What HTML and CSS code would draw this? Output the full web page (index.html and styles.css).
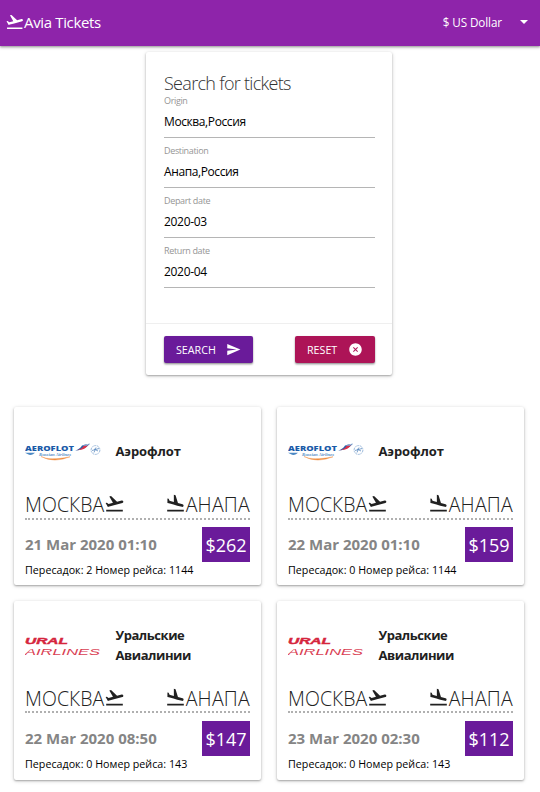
FILE: index.html
```
<!DOCTYPE html>
<html lang="en">
<head>
<meta charset="utf-8">
<title>Avia Tickets</title>
<link rel="stylesheet" href="styles.css">
</head>
<body>
<svg class="defs" aria-hidden="true">
  <symbol id="takeoff" viewBox="0 0 24 24"><path d="M2.5 19h19v2h-19zm19.57-9.36c-.21-.8-1.04-1.28-1.84-1.06L14.92 10l-6.9-6.43-1.93.51 4.14 7.17-4.97 1.33-1.97-1.54-1.45.39 1.82 3.16.77 1.33 1.6-.43 5.31-1.42 4.35-1.16L21 11.49c.81-.23 1.28-1.05 1.07-1.85z"/></symbol>
  <symbol id="land" viewBox="0 0 24 24"><path d="M2.5 19h19v2h-19zm7.18-5.73l4.35 1.16 5.31 1.42c.8.21 1.62-.26 1.84-1.06.21-.8-.26-1.62-1.06-1.84l-5.31-1.42-2.76-9.02L10.12 2v8.28L5.15 8.95l-.93-2.32-1.45-.39v5.17l1.6.43 5.31 1.43z"/></symbol>
  <symbol id="aeroflot-mark" viewBox="0 0 76 20">
    <path d="M50 7.500Q55 6 57 2.500Q61 1 65 .7Q62 4.500 57 6Q53 7.500 50 7.500Z" fill="#2a60a8"/>
    <path d="M52 7.300Q57 6 58.500 3L63 2.300Q60 6.500 56 6.800Z" fill="#dc3149"/>
    <path d="M57 2.500L65 .5L62 2.500Z" fill="#b9cde6"/>
    <path d="M0 9.800L10 9.800L8 11.300Q5 12.500 3 11.200Z" fill="#4b88c4"/>
    <path d="M16 13.500Q24 18 45 13.800Q29 20.500 16 13.500Z" fill="#ef8a3c" stroke="#ef8a3c" stroke-width=".4"/>
    <circle cx="70.500" cy="7" r="4.400" fill="none" stroke="#8fb0d6" stroke-width=".9" stroke-dasharray="2 .7"/>
    <path d="M67 7.500L74 5.500M69 9.500L71 4.500M69 6L73 8" stroke="#5d8cc0" stroke-width=".8"/>
  </symbol>
</svg>
<nav class="nav">
  <div class="brand"><svg class="brand-icon"><use href="#takeoff"/></svg><span>Avia Tickets</span></div>
  <div class="currency"><span>$ US Dollar</span><i class="caret"></i></div>
</nav>
<main>
  <form class="search">
    <div class="search-body">
      <h1>Search for tickets</h1>
      <div class="field"><label>Origin</label><p>Москва,Россия</p></div>
      <div class="field"><label>Destination</label><p>Анапа,Россия</p></div>
      <div class="field"><label>Depart date</label><p class="date">2020-03</p></div>
      <div class="field"><label>Return date</label><p class="date">2020-04</p></div>
    </div>
    <div class="actions">
      <button type="button" class="btn go"><span>SEARCH</span><svg viewBox="0 0 24 24"><path d="M2.010 21L23 12 2.010 3 2 10l15 2-15 2z"/></svg></button>
      <button type="button" class="btn reset"><span>RESET</span><svg viewBox="0 0 24 24"><path d="M12 2C6.470 2 2 6.470 2 12s4.470 10 10 10 10-4.470 10-10S17.530 2 12 2zm4 12.900L14.900 16 12 13.100 9.100 16 8 14.900 10.900 12 8 9.100 9.100 8 12 10.900 14.900 8 16 9.100 13.100 12z"/></svg></button>
    </div>
  </form>
  <section class="tickets">
    <article class="ticket">
      <div class="airline"><svg class="logo" viewBox="0 0 76 20"><text class="aero-name" x="0" y="7.500" textLength="49" lengthAdjust="spacingAndGlyphs">AEROFLOT</text><text class="aero-sub" x="14" y="13" textLength="32" lengthAdjust="spacingAndGlyphs">Russian Airlines</text><use href="#aeroflot-mark"/></svg><h2>Аэрофлот</h2></div>
      <div class="route"><div><span class="from">МОСКВА</span><svg><use href="#takeoff"/></svg></div><div><svg><use href="#land"/></svg><span class="to">АНАПА</span></div></div>
      <div class="fare"><time>21 Mar 2020 01:10</time><b>$262</b></div>
      <p class="info">Пересадок: 2 Номер рейса: 1144</p>
    </article>
    <article class="ticket">
      <div class="airline"><svg class="logo" viewBox="0 0 76 20"><text class="aero-name" x="0" y="7.500" textLength="49" lengthAdjust="spacingAndGlyphs">AEROFLOT</text><text class="aero-sub" x="14" y="13" textLength="32" lengthAdjust="spacingAndGlyphs">Russian Airlines</text><use href="#aeroflot-mark"/></svg><h2>Аэрофлот</h2></div>
      <div class="route"><div><span class="from">МОСКВА</span><svg><use href="#takeoff"/></svg></div><div><svg><use href="#land"/></svg><span class="to">АНАПА</span></div></div>
      <div class="fare"><time>22 Mar 2020 01:10</time><b>$159</b></div>
      <p class="info">Пересадок: 0 Номер рейса: 1144</p>
    </article>
    <article class="ticket ural">
      <div class="airline"><svg class="logo" viewBox="0 0 76 20"><text class="ural-name" x="0" y="7" textLength="43" lengthAdjust="spacingAndGlyphs">URAL</text><text class="ural-sub" x="0" y="17.500" textLength="75" lengthAdjust="spacingAndGlyphs">AIRLINES</text></svg><h2>Уральские<br>Авиалинии</h2></div>
      <div class="route"><div><span class="from">МОСКВА</span><svg><use href="#takeoff"/></svg></div><div><svg><use href="#land"/></svg><span class="to">АНАПА</span></div></div>
      <div class="fare"><time>22 Mar 2020 08:50</time><b>$147</b></div>
      <p class="info">Пересадок: 0 Номер рейса: 143</p>
    </article>
    <article class="ticket ural">
      <div class="airline"><svg class="logo" viewBox="0 0 76 20"><text class="ural-name" x="0" y="7" textLength="43" lengthAdjust="spacingAndGlyphs">URAL</text><text class="ural-sub" x="0" y="17.500" textLength="75" lengthAdjust="spacingAndGlyphs">AIRLINES</text></svg><h2>Уральские<br>Авиалинии</h2></div>
      <div class="route"><div><span class="from">МОСКВА</span><svg><use href="#takeoff"/></svg></div><div><svg><use href="#land"/></svg><span class="to">АНАПА</span></div></div>
      <div class="fare"><time>23 Mar 2020 02:30</time><b>$112</b></div>
      <p class="info">Пересадок: 0 Номер рейса: 143</p>
    </article>
  </section>
</main>
</body>
</html>
```
FILE: styles.css
```
* { box-sizing: border-box; }
body {
  margin: 0;
  background: #fff;
  color: #212121;
  font-family: "Open Sans", "Noto Sans", sans-serif;
  font-size: 11px;
  white-space: nowrap;
}
main { padding-bottom: 12px; }
h1, h2, p { margin: 0; }
svg { display: block; fill: currentColor; flex: none; }
.defs { position: absolute; width: 0; height: 0; }

.nav {
  display: flex;
  justify-content: space-between;
  height: 46px;
  padding: 0 12px 0 5px;
  background: #8e24aa;
  color: #fff;
  box-shadow: 0 1px 2px rgba(0,0,0,.3), 0 2px 3px rgba(0,0,0,.14);
}
.brand, .currency { display: flex; align-items: center; padding-bottom: 2px; }
.brand { font-size: 15px; letter-spacing: -.35px; }
.brand-icon { width: 19.500px; height: 19.500px; margin-right: -.500px; }
.currency { font-size: 11.700px; letter-spacing: -.1px; }
.caret {
  margin-left: 18px;
  border: 4px solid transparent;
  border-top-color: #fff;
  border-bottom: 0;
}

.search {
  width: 246px;
  height: 323px;
  margin: 6px 0 0 146px;
  border-radius: 2px;
  background: #fff;
  box-shadow: 0 1px 2px rgba(0,0,0,.28), 0 1px 4px rgba(0,0,0,.16);
}
.search-body { height: 271px; padding: 18px 17px 0 18px; }
h1 {
  height: 26px;
  color: #333;
  font-size: 18px;
  font-weight: 300;
  line-height: 26px;
  letter-spacing: -.7px;
}
.field { height: 50px; }
.field label {
  display: block;
  height: 10px;
  color: #959595;
  font-size: 9px;
  line-height: 10px;
  letter-spacing: -.35px;
}
.field p {
  height: 32px;
  border-bottom: 1px solid #b5b5b5;
  color: #000;
  font-size: 12px;
  line-height: 32px;
  letter-spacing: -.4px;
}
.field .date { letter-spacing: -.3px; }
.actions {
  display: flex;
  justify-content: space-between;
  height: 52px;
  padding: 12px 17px 0 18px;
  border-top: 1px solid #efefef;
}
.btn {
  display: flex;
  align-items: center;
  justify-content: space-between;
  height: 27px;
  padding: 0 12px;
  border: 0;
  border-radius: 2px;
  color: #fff;
  font: inherit;
  font-size: 10.700px;
  box-shadow: 0 1px 2px rgba(0,0,0,.35), 0 2px 2px rgba(0,0,0,.12);
}
.btn svg { width: 15px; height: 15px; }
.go { width: 89px; background: #6a1b9a; }
.reset { width: 80px; background: #ad1457; }

.tickets {
  display: grid;
  grid-template-columns: 247px 247px;
  gap: 16px;
  margin: 31.500px 0 0 14px;
}
.ticket {
  height: 178.500px;
  padding: 25px 11px 0;
  border-radius: 2px;
  box-shadow: 0 1px 2px rgba(0,0,0,.28), 0 1px 4px rgba(0,0,0,.16);
}
.ticket.ural { padding-top: 24.400px; }
.airline { display: flex; align-items: center; gap: 14.500px; height: 40px; }
.logo { width: 76px; height: 20px; margin-top: 3px; }
.aero-name {
  fill: #1b5ba8;
  font: 800 7.600px "Open Sans", sans-serif;
}
.aero-sub { fill: #5a8fc6; font: italic 700 5px "Liberation Serif", serif; }
.ural-name {
  fill: #d5253d;
  stroke: #d5253d;
  stroke-width: .4px;
  font: italic 700 9px "Liberation Sans", sans-serif;
}
.ural-sub { fill: #d93d52; font: italic 400 9.400px "Liberation Sans", sans-serif; }
h2 { margin-top: -1px; font-size: 13px; font-weight: 700; line-height: 20px; letter-spacing: -.1px; }
.ural h2 { margin-top: 0; letter-spacing: -.45px; }
.route {
  display: flex;
  justify-content: space-between;
  height: 48px;
  padding-top: 17.500px;
  border-bottom: 2px dotted #b0b0b0;
}
.route div { display: flex; height: 30px; line-height: 32px; font-size: 19.500px; font-weight: 300; }
.route svg { width: 21px; height: 21px; margin-top: 4px; }
.from { letter-spacing: .08px; }
.to { letter-spacing: .25px; }
.fare { display: flex; justify-content: space-between; align-items: center; height: 35px; margin-top: 7.500px; }
.fare time { padding-bottom: 1px; color: #858585; font-size: 15px; font-weight: 700; }
.fare b {
  width: 48px;
  height: 35px;
  background: #6a1b9a;
  color: #fff;
  font-size: 18px;
  font-weight: 400;
  line-height: 36px;
  text-align: center;
}
.info { color: #000; font-size: 10.700px; line-height: 16px; letter-spacing: .02px; }
```
